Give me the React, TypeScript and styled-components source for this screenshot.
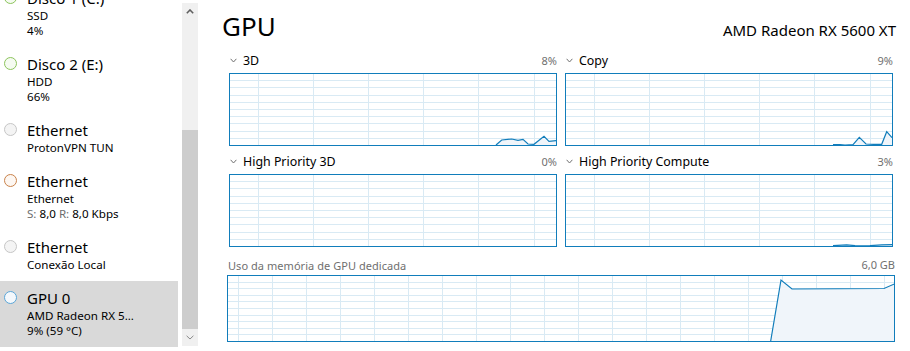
import React, { FC } from 'react';
import styled, { createGlobalStyle } from 'styled-components';

const GlobalStyle = createGlobalStyle`
	html, body {
		margin: 0;
		padding: 0;
		background: #ffffff;
	}
	body {
		font-family: "Noto Sans", "Open Sans", sans-serif;
		color: #000000;
	}
`;

const LINE = '#117dbb';
const GRID = '#d9eaf4';

const Page = styled.div`
	display: flex;
	width: 910px;
	height: 351px;
	overflow: hidden;
	background: #ffffff;
`;

const Sidebar = styled.div`
	display: flex;
	width: 200px;
	flex-shrink: 0;
	gap: 4px;
`;

const List = styled.div`
	width: 178px;
	overflow: hidden;
`;

const ListScroll = styled.div`
	margin-top: -19px;
`;

const Item = styled.div<{ $selected?: boolean }>`
	display: flex;
	align-items: flex-start;
	gap: 10px;
	padding: 7px 0 9px 4px;
	background: ${({ $selected }): string => ($selected ? '#d9d9d9' : 'transparent')};
`;

const Dot = styled.span<{ $stroke: string; $fill: string }>`
	flex-shrink: 0;
	width: 11px;
	height: 11px;
	margin-top: 3px;
	border-radius: 50%;
	border: 1px solid ${({ $stroke }): string => $stroke};
	background: ${({ $fill }): string => $fill};
`;

const ItemText = styled.div`
	display: flex;
	flex-direction: column;
`;

const ItemTitle = styled.span`
	font-size: 15px;
	line-height: 20px;
	color: #000000;
`;

const ItemSub = styled.span`
	font-size: 11.6px;
	line-height: 15px;
	color: #000000;
	white-space: nowrap;
`;

const Muted = styled.span`
	color: #6d6d6d;
`;

const ScrollBar = styled.div`
	display: flex;
	flex-direction: column;
	width: 16px;
	margin-top: 3px;
	height: 343px;
	background: #f0f0f0;
	box-shadow: 1px 10px 0 -9px #d6d6d6;
`;

const ScrollButton = styled.div`
	display: flex;
	align-items: center;
	justify-content: center;
	height: 17px;
	flex-shrink: 0;
`;

const ScrollTrack = styled.div`
	flex: 1;
	display: flex;
	flex-direction: column;
`;

const Thumb = styled.div`
	margin-top: 110px;
	flex: 1;
	background: #cdcdcd;
`;

const Main = styled.div`
	flex: 1;
	display: flex;
	flex-direction: column;
	padding: 0 14px 0 22px;
`;

const Header = styled.div`
	display: flex;
	justify-content: space-between;
	align-items: baseline;
	padding: 8px 0 4px;
`;

const Title = styled.span`
	font-size: 26px;
	line-height: 36px;
	color: #000000;
`;

const Model = styled.span`
	font-size: 15px;
	color: #000000;
`;

const ChartGrid = styled.div`
	display: grid;
	grid-template-columns: 328px 328px;
	column-gap: 8px;
	row-gap: 3px;
	margin-left: 7px;
`;

const Block = styled.div`
	display: flex;
	flex-direction: column;
`;

const LabelRow = styled.div<{ $h: number }>`
	display: flex;
	align-items: center;
	justify-content: space-between;
	height: ${({ $h }): number => $h}px;
`;

const LabelLeft = styled.div`
	display: flex;
	align-items: center;
	gap: 6px;
	padding-left: 1px;
`;

const Label = styled.span`
	font-size: 12.4px;
	color: #000000;
	margin-top: -1px;
`;

const Value = styled.span`
	font-size: 11px;
	color: #707070;
	margin-top: -1px;
`;

const MemorySection = styled.div`
	display: flex;
	flex-direction: column;
	margin: 8px 1px 0 5px;
`;

const MemLabel = styled.span`
	font-size: 11px;
	letter-spacing: 0.05px;
	color: #6f6f6f;
	padding-left: 1px;
`;

type Pt = [number, number];

type ChartProps = {
	width: number;
	height: number;
	colOffset: number;
	colStep: number;
	points?: Pt[];
};

const Chart: FC<ChartProps> = ({ width, height, colOffset, colStep, points }) => {
	const rows = Array.from({ length: 9 }, (_, i) => Math.round(((i + 1) * (height - 1)) / 10) + 0.5);
	const cols: number[] = [];
	for (let x = colOffset; x < width - 1; x += colStep) cols.push(Math.round(x) + 0.5);
	const line = points ? points.map(([x, y]) => `${x},${y}`).join(' ') : '';
	const area = points
		? `${points[0][0]},${height - 1} ${line} ${points[points.length - 1][0]},${height - 1}`
		: '';
	return (
		<svg width={width} height={height} style={{ display: 'block' }}>
			{rows.map((y) => (
				<line key={`r${y}`} x1={0} x2={width} y1={y} y2={y} stroke={GRID} strokeWidth={1} />
			))}
			{cols.map((x) => (
				<line key={`c${x}`} x1={x} x2={x} y1={0} y2={height} stroke={GRID} strokeWidth={1} />
			))}
			{points && <polygon points={area} fill="#f0f5fa" />}
			{points && <polyline points={line} fill="none" stroke={LINE} strokeWidth={1.2} />}
			<rect x={0.5} y={0.5} width={width - 1} height={height - 1} fill="none" stroke={LINE} strokeWidth={1} />
		</svg>
	);
};

const Chevron: FC<{ up?: boolean; color: string; w?: number }> = ({ up, color, w = 8 }) => (
	<svg width={w} height={5} viewBox={`0 0 ${w} 5`} style={{ display: 'block' }}>
		<polyline
			points={up ? `0.8,4.2 ${w / 2},1 ${w - 0.8},4.2` : `0.6,0.8 ${w / 2},4 ${w - 0.6},0.8`}
			fill="none"
			stroke={color}
			strokeWidth={up ? 1.6 : 1}
		/>
	</svg>
);

type Engine = { label: string; value: string; points?: Pt[] };

const engines: Engine[] = [
	{
		label: '3D',
		value: '8%',
		points: [
			[267, 72], [272.7, 67], [282.7, 66], [289, 67.3], [294, 66.3], [299, 71],
			[305, 71.3], [315, 63.3], [320, 68.3], [327, 67.7]
		]
	},
	{
		label: 'Copy',
		value: '9%',
		points: [
			[268, 71.5], [275, 71.5], [280, 72], [288, 71.7], [294.3, 64.3], [301, 71],
			[308.3, 71.3], [316.7, 71.3], [321.7, 58.7], [327, 64.7]
		]
	},
	{ label: 'High Priority 3D', value: '0%' },
	{
		label: 'High Priority Compute',
		value: '3%',
		points: [
			[268, 71.6], [281.7, 70.8], [290, 71.6], [296.7, 71.9], [305, 71.6],
			[316.7, 70.8], [327, 70.6]
		]
	}
];

const memory: Pt[] = [[543.7, 66], [554, 5], [565, 14], [657, 13.5], [668, 8.7]];

type Device = {
	title: string;
	stroke: string;
	fill: string;
	lines: React.ReactNode[];
	selected?: boolean;
};

const devices: Device[] = [
	{ title: 'Disco 1 (C:)', stroke: '#8cc45c', fill: '#f5fbf1', lines: ['SSD', '4%'] },
	{ title: 'Disco 2 (E:)', stroke: '#8cc45c', fill: '#f5fbf1', lines: ['HDD', '66%'] },
	{ title: 'Ethernet', stroke: '#c6c6c6', fill: '#f4f4f4', lines: ['ProtonVPN TUN'] },
	{
		title: 'Ethernet',
		stroke: '#c9824a',
		fill: '#fdf7f2',
		lines: [
			'Ethernet',
			<>
				<Muted>S:</Muted> 8,0 <Muted>R:</Muted> 8,0 Kbps
			</>
		]
	},
	{ title: 'Ethernet', stroke: '#c6c6c6', fill: '#f4f4f4', lines: ['Conexão Local'] },
	{
		title: 'GPU 0',
		stroke: '#5aa6d8',
		fill: '#f4f8fc',
		lines: ['AMD Radeon RX 5...', '9% (59 °C)'],
		selected: true
	}
];

const App: FC = () => (
	<>
		<GlobalStyle />
		<Page>
			<Sidebar>
				<List>
					<ListScroll>
						{devices.map((d, i) => (
							<Item key={i} $selected={d.selected}>
								<Dot $stroke={d.stroke} $fill={d.fill} />
								<ItemText>
									<ItemTitle>{d.title}</ItemTitle>
									{d.lines.map((l, j) => (
										<ItemSub key={j}>{l}</ItemSub>
									))}
								</ItemText>
							</Item>
						))}
					</ListScroll>
				</List>
				<ScrollBar>
					<ScrollButton>
						<Chevron up color="#606060" />
					</ScrollButton>
					<ScrollTrack>
						<Thumb />
					</ScrollTrack>
					<ScrollButton>
						<Chevron color="#8a8a8a" />
					</ScrollButton>
				</ScrollBar>
			</Sidebar>
			<Main>
				<Header>
					<Title>GPU</Title>
					<Model>AMD Radeon RX 5600 XT</Model>
				</Header>
				<ChartGrid>
					{engines.map((e) => (
						<Block key={e.label}>
							<LabelRow $h={25}>
								<LabelLeft>
									<Chevron color="#707070" w={7} />
									<Label>{e.label}</Label>
								</LabelLeft>
								<Value>{e.value}</Value>
							</LabelRow>
							<Chart width={328} height={73} colOffset={28.5} colStep={55.2} points={e.points} />
						</Block>
					))}
				</ChartGrid>
				<MemorySection>
					<LabelRow $h={20}>
						<MemLabel>Uso da memória de GPU dedicada</MemLabel>
						<Value>6,0 GB</Value>
					</LabelRow>
					<Chart width={668} height={67} colOffset={11} colStep={34} points={memory} />
				</MemorySection>
			</Main>
		</Page>
	</>
);

export default App;
